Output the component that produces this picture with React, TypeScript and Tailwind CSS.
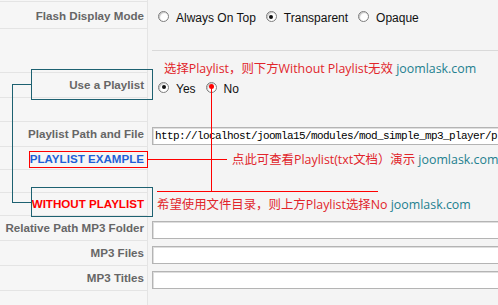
import type { ReactNode } from 'react';

const Radio = ({ checked = false }: { checked?: boolean }) => (
  <span className="mb-[3px] flex h-[11px] w-[11px] shrink-0 items-center justify-center rounded-full border border-[#7d7d7d] bg-white shadow-[inset_1px_1px_1px_#c4c4c4]">
    {checked && <span className="h-[4px] w-[4px] rounded-full bg-[#111]" />}
  </span>
);

const Option = ({ label, checked }: { label: string; checked?: boolean }) => (
  <span className="flex items-center gap-[7px]">
    <Radio checked={checked} />
    <span>{label}</span>
  </span>
);

const Row = ({
  h,
  label,
  labelClass = 'text-[#666]',
  children,
}: {
  h: string;
  label?: string;
  labelClass?: string;
  children?: ReactNode;
}) => (
  <div className={`flex ${h}`}>
    <div
      className={`flex w-[148px] shrink-0 items-center justify-end border-r border-b border-[#e4e4e4] bg-[#f6f6f6] pr-[3px] text-[11.6px] font-bold ${labelClass}`}
    >
      {label}
    </div>
    <div className="flex flex-1">{children}</div>
  </div>
);

const Note = ({ text }: { text: string }) => (
  <span className="whitespace-nowrap font-['Open_Sans','Noto_Sans_CJK_SC',sans-serif] text-[12.4px] leading-[14px]">
    <span className="text-[#e1252b]">{text}</span>{' '}
    <span className="text-[#23808f]">joomlask.com</span>
  </span>
);

const Field = ({ value = '' }: { value?: string }) => (
  <div className="h-[18px] w-[400px] overflow-hidden whitespace-nowrap border border-[#b4b4b4] bg-white pl-[2px] font-['Liberation_Mono',monospace] text-[11px] leading-[16px] tracking-[-0.6px] text-black shadow-[inset_1px_1px_0_#dedede]">
    {value}
  </div>
);

export default function App() {
  return (
    <div className="relative h-[305px] w-[498px] overflow-hidden bg-[#f4f4f4] font-['Liberation_Sans',Arial,sans-serif] text-[12px] text-[#111]">
      <Row h="h-[2px]" />
      <Row h="h-[27px]" label="Flash Display Mode" labelClass="text-[#666] pt-[2px]">
        <div className="flex items-center gap-[10px] pt-[5px] pl-[10px]">
          <Option label="Always On Top" />
          <Option label="Transparent" checked />
          <Option label="Opaque" />
        </div>
      </Row>
      <Row h="h-[44px]">
        <div className="flex flex-1 flex-col">
          <div className="h-[21px] shrink-0" />
          <div className="ml-[4px] shrink-0 border-t border-[#d9d9d9] pt-[11px] pl-[12px] leading-[14px]">
            <Note text="选择Playlist，则下方Without Playlist无效" />
          </div>
        </div>
      </Row>
      <Row h="h-[25px]" label="Use a Playlist">
        <div className="flex items-center gap-[10px] pt-[6px] pl-[10px]">
          <Option label="Yes" checked />
          <Option label="No" />
        </div>
      </Row>
      <Row h="h-[24px]" />
      <Row h="h-[25px]" label="Playlist Path and File">
        <div className="flex items-center pt-[2px] pl-[4px]">
          <Field value="http://localhost/joomla15/modules/mod_simple_mp3_player/pl" />
        </div>
      </Row>
      <Row h="h-[23px]" label="PLAYLIST EXAMPLE" labelClass="text-[#1f5fd6] pt-[2px]">
        <div className="flex items-center pt-[2px] pl-[84px]">
          <Note text="点此可查看Playlist(txt文档）演示" />
        </div>
      </Row>
      <Row h="h-[23px]" />
      <Row h="h-[23px]" label="WITHOUT PLAYLIST" labelClass="text-[#ff0000]">
        <div className="flex items-center pl-[9px]">
          <Note text="希望使用文件目录，则上方Playlist选择No" />
        </div>
      </Row>
      <Row h="h-[25px]" label="Relative Path MP3 Folder">
        <div className="flex items-center pt-[2px] pl-[4px]">
          <Field />
        </div>
      </Row>
      <Row h="h-[25px]" label="MP3 Files">
        <div className="flex items-center pt-[2px] pl-[4px]">
          <Field />
        </div>
      </Row>
      <Row h="h-[25px]" label="MP3 Titles">
        <div className="flex items-center pt-[2px] pl-[4px]">
          <Field />
        </div>
      </Row>
      <Row h="h-[20px]" />

      {/* annotation overlay */}
      <div className="absolute top-[69px] left-[31px] h-[31px] w-[122px] border border-[#1d6171]" />
      <div className="absolute top-[187px] left-[31px] h-[30px] w-[122px] border border-[#1d6171]" />
      <div className="absolute top-[84px] left-[12px] h-[119px] w-px bg-[#1d6171]" />
      <div className="absolute top-[84px] left-[12px] h-px w-[19px] bg-[#1d6171]" />
      <div className="absolute top-[202px] left-[12px] h-px w-[19px] bg-[#1d6171]" />

      <div className="absolute top-[151px] left-[29px] h-[17px] w-[119px] border border-[#ff0000]" />
      <div className="absolute top-[159px] left-[147px] h-px w-[80px] bg-[#ff0000]" />
      <div className="absolute top-[86px] left-[211px] h-[105px] w-px bg-[#ff0000]" />
      <div className="absolute top-[191px] left-[157px] h-px w-[221px] bg-[#ff0000]" />
      <div className="absolute top-[84px] left-[209px] h-[5px] w-[5px] rounded-full bg-[#ff0000]" />
    </div>
  );
}
